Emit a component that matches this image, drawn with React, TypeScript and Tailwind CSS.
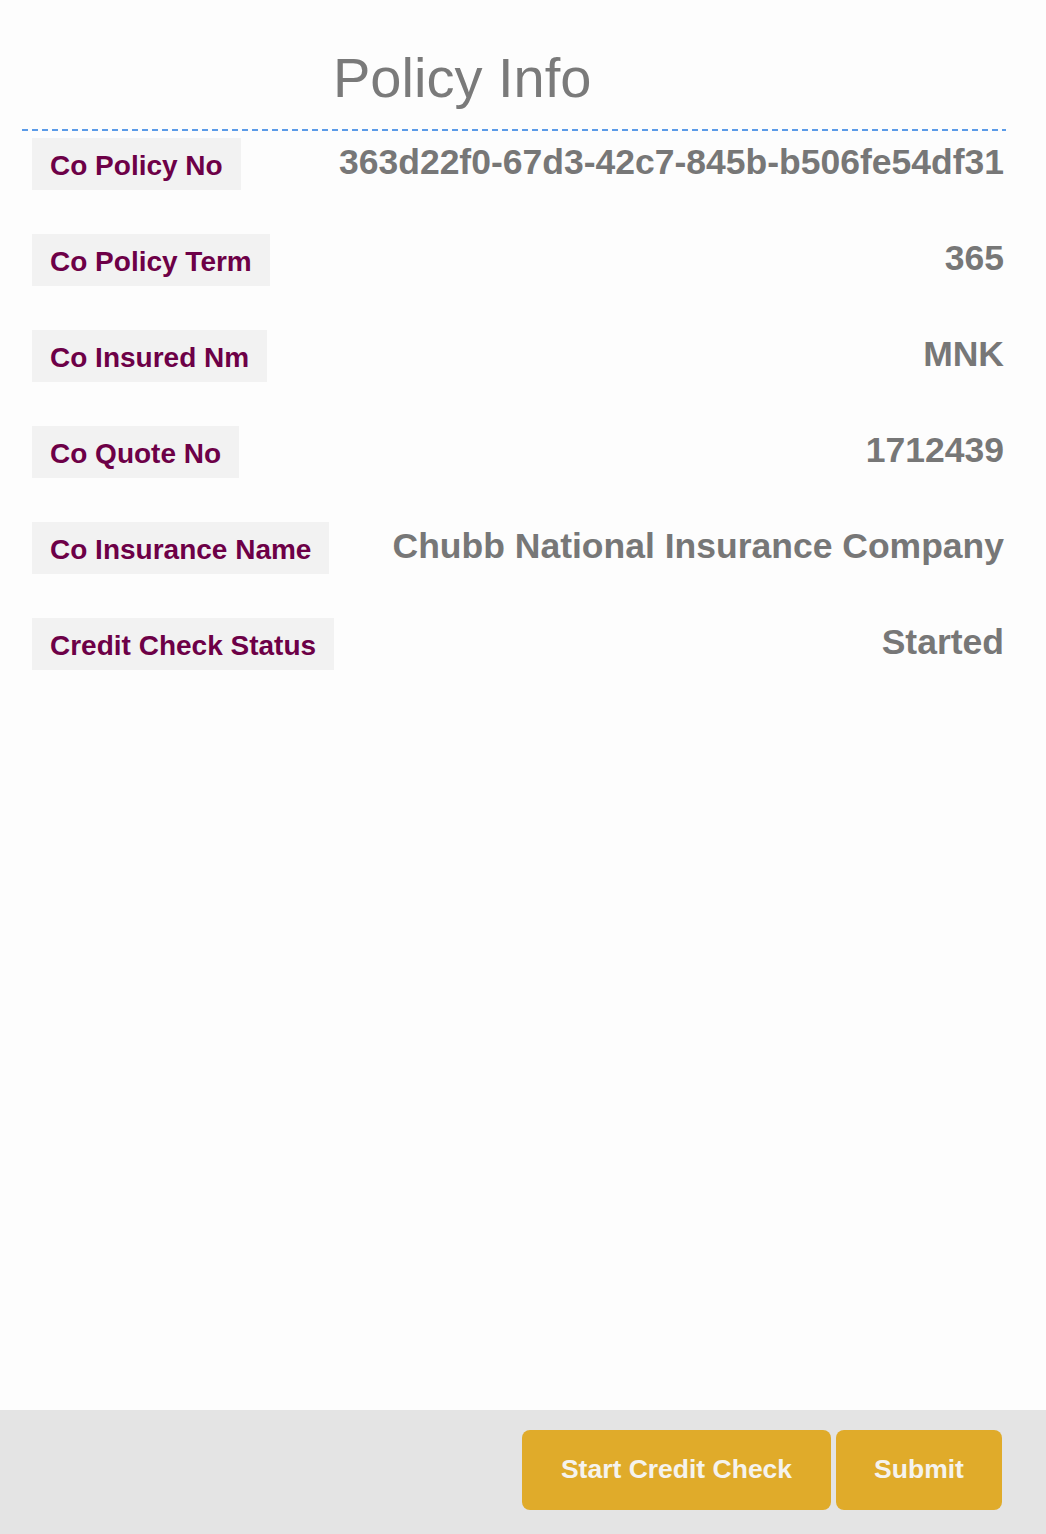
const rows = [
    { label: 'Co Policy No', value: '363d22f0-67d3-42c7-845b-b506fe54df31' },
    { label: 'Co Policy Term', value: '365' },
    { label: 'Co Insured Nm', value: 'MNK' },
    { label: 'Co Quote No', value: '1712439' },
    { label: 'Co Insurance Name', value: 'Chubb National Insurance Company' },
    { label: 'Credit Check Status', value: 'Started' },
]

const App = () => {
    return <>
        <div className="flex flex-col h-[1534px] bg-[#fdfdfd] font-['Liberation_Sans',Arial,sans-serif]">
            <div className="flex-1">
                <h1 className="pt-[50px] pl-[333px] text-[56px] leading-none font-normal text-[#7a7a7a]">Policy Info</h1>
                <div className="mt-[23px] ml-[22px] mr-[40px] h-[2px] bg-[repeating-linear-gradient(to_right,#5b9be8_0px,#5b9be8_6px,transparent_6px,transparent_10px)]"></div>
                <div className="flex flex-col gap-[44px] pt-[7px]">
                    {rows.map(row => (
                        <div key={row.label} className="flex justify-between items-center pl-[32px] pr-[42px]">
                            <div className="h-[52px] flex items-center px-[18px] pt-[3px] bg-[#f2f2f2] text-[28px] font-bold text-[#6d0047]">{row.label}</div>
                            <div className="pb-[3px] text-[35.5px] font-bold text-[#777777] leading-none">{row.value}</div>
                        </div>
                    ))}
                </div>
            </div>
            <div className="h-[124px] bg-[#e4e4e4] flex justify-end items-start pt-[20px] pr-[44px] gap-[5px]">
                <button className="h-[80px] w-[309px] rounded-[8px] bg-[#e0ab2a] text-[26.5px] font-bold text-[#f5f3ee]">Start Credit Check</button>
                <button className="h-[80px] w-[166px] rounded-[8px] bg-[#e0ab2a] text-[26.5px] font-bold text-[#f5f3ee]">Submit</button>
            </div>
        </div>
    </>
}

export default App
